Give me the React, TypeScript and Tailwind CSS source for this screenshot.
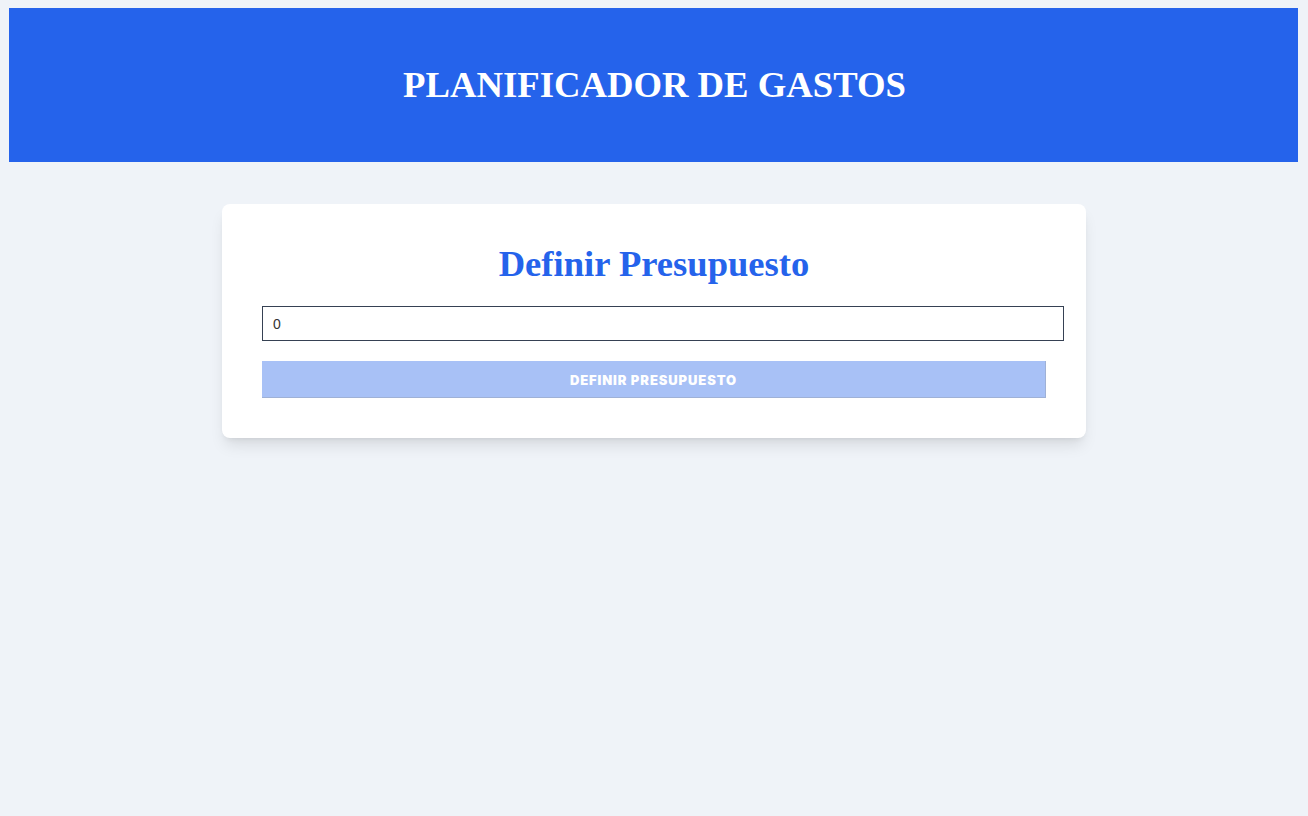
import React, { FC, useState } from "react";

const App: FC = () => {
  const [budget, setBudget] = useState<string>("0");

  return (
    <div className="min-h-screen bg-[#eff3f8] pt-2 pl-[9px] pr-[10px]">
      <header className="bg-[#2563eb] h-[154px] flex items-center justify-center">
        <h1 className="text-white text-[36.7px] font-bold uppercase font-['Liberation_Serif',serif] pl-[2px]">
          Planificador de Gastos
        </h1>
      </header>

      <div className="flex justify-center pt-[42px] pl-[1px]">
        <div className="w-[864px] bg-white rounded-lg shadow-lg px-10 pt-10 pb-10">
          <h2 className="text-center text-[36.6px] leading-10 font-bold text-[#2563eb] font-['Liberation_Serif',serif]">
            Definir Presupuesto
          </h2>
          <input
            type="number"
            value={budget}
            onChange={(e) => setBudget(e.target.value)}
            className="mt-[22px] block w-[802px] h-[35px] px-2.5 border border-gray-700 text-sm text-[#333] font-['Liberation_Sans',sans-serif] outline-none"
          />
          <button
            disabled
            className="mt-5 block w-full h-[37px] pt-[3px] bg-[#a8c1f6] border-r border-b border-[#9fb1d6] text-white text-[13px] font-black tracking-[0.9px] uppercase font-['Inter',sans-serif]"
          >
            Definir Presupuesto
          </button>
        </div>
      </div>
    </div>
  );
};

export default App;
